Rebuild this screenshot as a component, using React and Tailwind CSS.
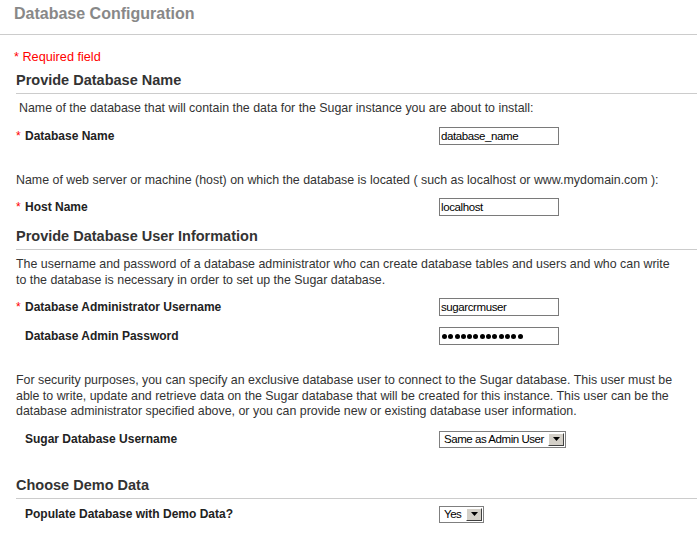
import React from "react";

const FONT = { fontFamily: '"Liberation Sans", Arial, sans-serif' };

function Star() {
  return <span className="inline-block w-[9px] text-[#ff0000] font-normal">*</span>;
}

function Row({ label, required, children, className = "" }) {
  return (
    <div className={`flex h-[18px] items-center ${className}`}>
      <div className="w-[423px] flex items-center text-[12px] font-bold text-[#222]">
        {required ? <Star /> : <span className="inline-block w-[9px]" />}
        <span>{label}</span>
      </div>
      <div className="flex items-center">{children}</div>
    </div>
  );
}

function TextBox({ value }) {
  return (
    <div className="w-[120px] h-[18px] border border-[#7a7a7a] bg-white px-[1px] text-[11.5px] tracking-[-0.4px] leading-[16px] text-black">
      {value}
    </div>
  );
}

function PasswordBox({ count }) {
  return (
    <div className="w-[120px] h-[18px] border border-[#7a7a7a] bg-white pl-[2px] flex items-center gap-[1.3px]">
      {Array.from({ length: count }).map((_, i) => (
        <span key={i} className="block w-[5px] h-[5px] rounded-full bg-black" />
      ))}
    </div>
  );
}

function Select({ value, width }) {
  return (
    <div
      className="h-[17px] border border-[#7f7f7f] bg-white flex items-stretch"
      style={{ width }}
    >
      <div className="flex-1 pl-[4px] text-[11.5px] tracking-[-0.45px] leading-[15px] text-black whitespace-nowrap overflow-hidden">{value}</div>
      <div className="w-[16px] m-[1px] bg-[#d4d0c8] border border-t-white border-l-white border-r-[#404040] border-b-[#404040] flex items-center justify-center">
        <svg width="7" height="4" viewBox="0 0 7 4">
          <path d="M0 0h7L3.5 4z" fill="#000" />
        </svg>
      </div>
    </div>
  );
}

function Heading({ children, className = "" }) {
  return (
    <div className={`h-[23px] border-b border-[#cccccc] text-[14.5px] leading-[18px] font-bold text-[#333] ${className}`}>
      {children}
    </div>
  );
}

function Lines({ lines, className = "" }) {
  return (
    <div className={`text-[12.4px] text-[#333] ${className}`}>
      {lines.map((l, i) => (
        <div key={i} className="whitespace-nowrap">{l}</div>
      ))}
    </div>
  );
}

export default function App() {
  return (
    <div className="w-[697px] h-[534px] bg-white overflow-hidden" style={FONT}>
      <div className="h-[35px] border-b border-[#cccccc] pl-[14px] pt-[4px] text-[16px] leading-[20px] font-bold text-[#888888]">
        Database Configuration
      </div>
      <div className="pl-[16px]">
        <div className="mt-[14px] -ml-[2px] h-[16px] text-[12.7px] leading-[16px] text-[#ff0000]">* Required field</div>
        <Heading className="mt-[6px]">Provide Database Name</Heading>
        <Lines
          className="mt-[6px] pl-[3px] leading-[16px]"
          lines={["Name of the database that will contain the data for the Sugar instance you are about to install:"]}
        />
        <Row className="mt-[11px]" label="Database Name" required>
          <TextBox value="database_name" />
        </Row>
        <Lines
          className="mt-[27px] leading-[16px]"
          lines={["Name of web server or machine (host) on which the database is located ( such as localhost or www.mydomain.com ):"]}
        />
        <Row className="mt-[10px]" label="Host Name" required>
          <TextBox value="localhost" />
        </Row>
        <Heading className="mt-[11px]">Provide Database User Information</Heading>
        <Lines
          className="mt-[6px] leading-[16px]"
          lines={[
            "The username and password of a database administrator who can create database tables and users and who can write",
            "to the database is necessary in order to set up the Sugar database.",
          ]}
        />
        <Row className="mt-[10px]" label="Database Administrator Username" required>
          <TextBox value="sugarcrmuser" />
        </Row>
        <Row className="mt-[11px]" label="Database Admin Password">
          <PasswordBox count={13} />
        </Row>
        <Lines
          className="mt-[28px] leading-[15.5px]"
          lines={[
            "For security purposes, you can specify an exclusive database user to connect to the Sugar database. This user must be",
            "able to write, update and retrieve data on the Sugar database that will be created for this instance. This user can be the",
            "database administrator specified above, or you can provide new or existing database user information.",
          ]}
        />
        <Row className="mt-[10.5px]" label="Sugar Database Username">
          <Select value="Same as Admin User" width={127} />
        </Row>
        <Heading className="mt-[28px]">Choose Demo Data</Heading>
        <Row className="mt-[6px]" label="Populate Database with Demo Data?">
          <Select value="Yes" width={45} />
        </Row>
      </div>
    </div>
  );
}
